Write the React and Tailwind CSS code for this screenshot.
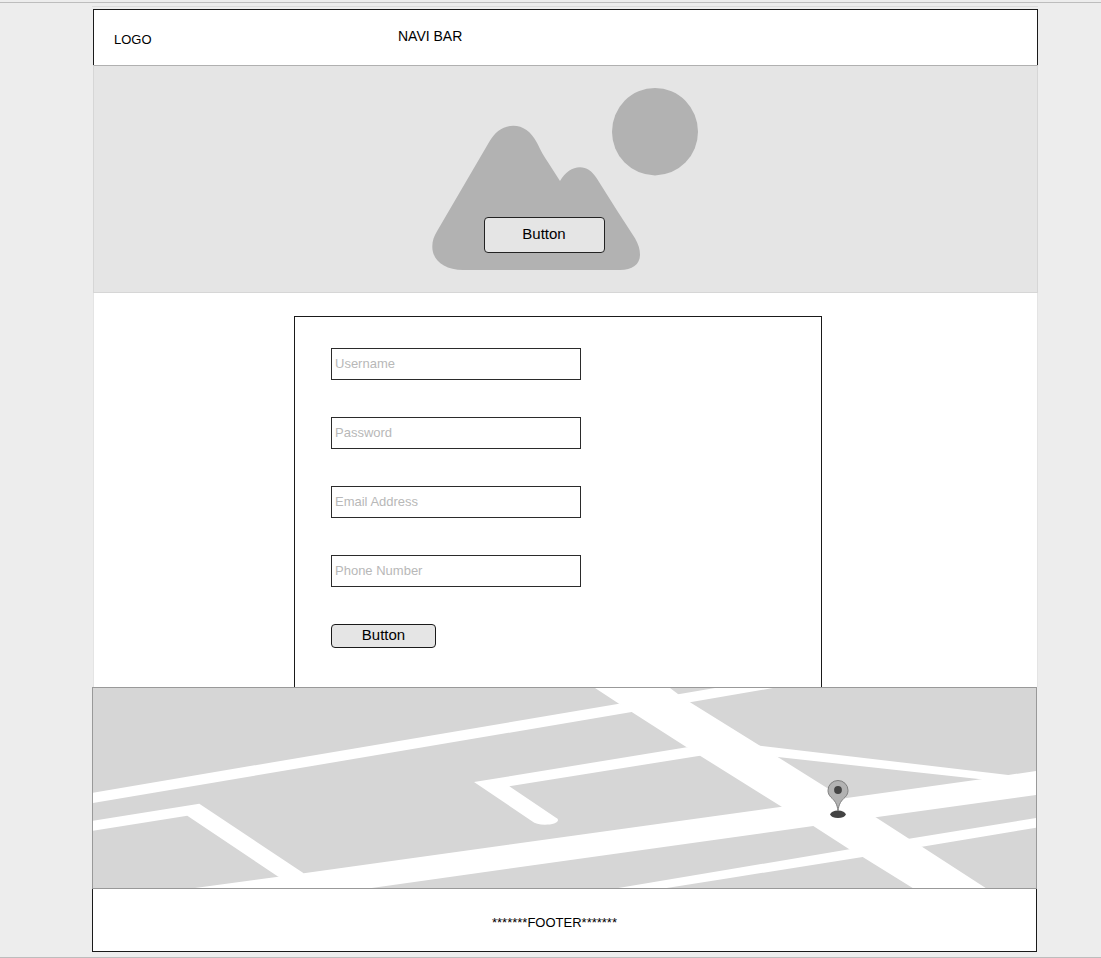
const FIELDS = [
  { id: 'username', label: 'Username', type: 'text' },
  { id: 'password', label: 'Password', type: 'password' },
  { id: 'email', label: 'Email Address', type: 'email' },
  { id: 'phone', label: 'Phone Number', type: 'tel' },
];

function Header() {
  return (
    <header className="ml-px flex h-14 border-x border-t border-[#1a1a1a] bg-white pl-5">
      <a href="#home" className="w-[284px] shrink-0 pt-5">LOGO</a>
      <nav className="pt-4 text-[14px]">
        <a href="#nav">NAVI BAR</a>
      </nav>
    </header>
  );
}

function Hero() {
  return (
    <section className="ml-px flex justify-center border border-[#d6d6d6] border-t-[#b0b0b0] bg-[#e5e5e5] pt-[22px] pr-0.5 pb-[22px]">
      <div className="relative">
        <svg className="block h-[182px] w-[266px]" viewBox="0 0 266 182" fill="#b2b2b2" aria-hidden="true">
          <path d="M5.3 142.7L57 54.3C63 43.5 71 37.7 81.3 37.7C91 37.7 99 43.5 104.7 54.3C109 63 112 68.500 116.300 74.700L128 93C133.500 84 140 79.300 148 79.300C154.500 79.300 160 83 164.700 90.300L184.700 122L203 150.300C206.500 156.500 208 161 208 167C208 176.500 200 182 188 182L31.300 182C12 182 0.300 172 0.300 158.700C0.300 153 2 148 5.300 142.700Z" />
          <ellipse cx="223" cy="43.700" rx="43" ry="43.700" />
        </svg>
        <button type="button" className="absolute top-[129px] left-[52px] h-9 w-[121px] rounded border border-[#222] bg-[#e5e5e5] pb-0.5 text-[15px]">
          Button
        </button>
      </div>
    </section>
  );
}

function SignupForm() {
  return (
    <main className="ml-px border-x border-[#e4e4e4] bg-white px-[200px] pt-[23px]">
      <form className="mr-[15px] flex flex-col items-start gap-[37px] border-x border-t border-[#1a1a1a] px-9 pt-[31px] pb-[39px]">
        {FIELDS.map((f) => (
          <input
            key={f.id}
            id={f.id}
            type={f.type}
            aria-label={f.label}
            placeholder={f.label}
            className="block h-8 w-full max-w-[250px] border border-[#2b2b2b] bg-white px-[3px] pb-0.5 placeholder:text-[#b8b8b8]"
          />
        ))}
        <button type="button" className="h-6 w-[105px] rounded border border-[#1a1a1a] bg-[#e5e5e5] pb-0.5 text-[15px] leading-5">
          Button
        </button>
      </form>
    </main>
  );
}

function StreetMap() {
  return (
    <section aria-label="Map" className="relative mr-px border border-[#999] bg-[#d6d6d6]">
      <svg className="block h-[200px] w-full" viewBox="0 0 943 200" preserveAspectRatio="none" fill="#fff" aria-hidden="true">
        <path d="M0 104.700L526 15.700L545 20L538.700 24L0 115Z" />
        <path d="M0 132.700L106.300 115.700L210.700 185.300L205 193L185.300 188.700L94.300 127.700L0 142.700Z" />
        <path d="M502 0H577L585.300 6.300L597 14.300L667 57.700L684.700 69L733.700 99.700L782.700 129.300L816 150.700L829 158.700L892.700 200H819.700L769.700 169L756.300 161.300L720.300 138L688.700 118.700L607 67.700L593.700 59.300L538.700 24L526 15.700Z" />
        <path d="M585.300 6.300L622 0H680L597 14.300L580 10Z" />
        <path d="M593.700 59.300L381 94L438.700 133C442 135.500 446 136.700 452 136.700C459 136.700 465 135 465 132C465 131 464.500 130.500 463 129.700L416.300 98.300L607 67.700L612 63Z" />
        <path d="M102 200L185.300 188.700L210.700 185.300L688.700 118.700L753.700 110L887.700 91.300L915.300 87L943 83V107L782.700 129.300L720.300 138L278.700 200Z" />
        <path d="M660 57L667 57.700L915.300 87L920 92L887.700 91.300L684.700 69L670 66Z" />
        <path d="M525.300 200L637 181.300L756.300 161.300L816 150.700L943 130V139.700L829 158.700L769.700 169L637 190L573.700 200Z" />
      </svg>
      <svg className="absolute top-[91px] left-[79%] h-10 w-6 -translate-x-1/2" viewBox="0 0 24 40" aria-hidden="true">
        <ellipse cx="12" cy="35.300" rx="7.700" ry="3.700" fill="#444" />
        <path d="M12 32C11.200 24.500 8.500 21.500 5 18.300C2.800 16.200 2 13.800 2 11.300A10 9.800 0 0 1 22 11.300C22 13.800 21.200 16.200 19 18.300C15.500 21.500 12.800 24.500 12 32Z" fill="#b2b2b2" stroke="#808080" />
        <circle cx="12" cy="11" r="3.900" fill="#444" />
      </svg>
    </section>
  );
}

export default function App() {
  return (
    <div className="bg-[#ededed] pt-0.5 font-['Liberation_Sans',Arial,sans-serif] text-[13px] leading-5 text-black">
      <div className="border-y border-[#bdbdbd] pt-[3px] pr-[63px] pb-[5px] pl-[92px]">
        <div className="border-t border-[#dcdcdc] pt-0.5">
          <Header />
          <Hero />
          <SignupForm />
          <StreetMap />
          <footer className="mr-px border-x border-b border-[#1a1a1a] bg-white pt-6 pr-5 pb-[18px] text-center">
            *******FOOTER*******
          </footer>
        </div>
      </div>
    </div>
  );
}
